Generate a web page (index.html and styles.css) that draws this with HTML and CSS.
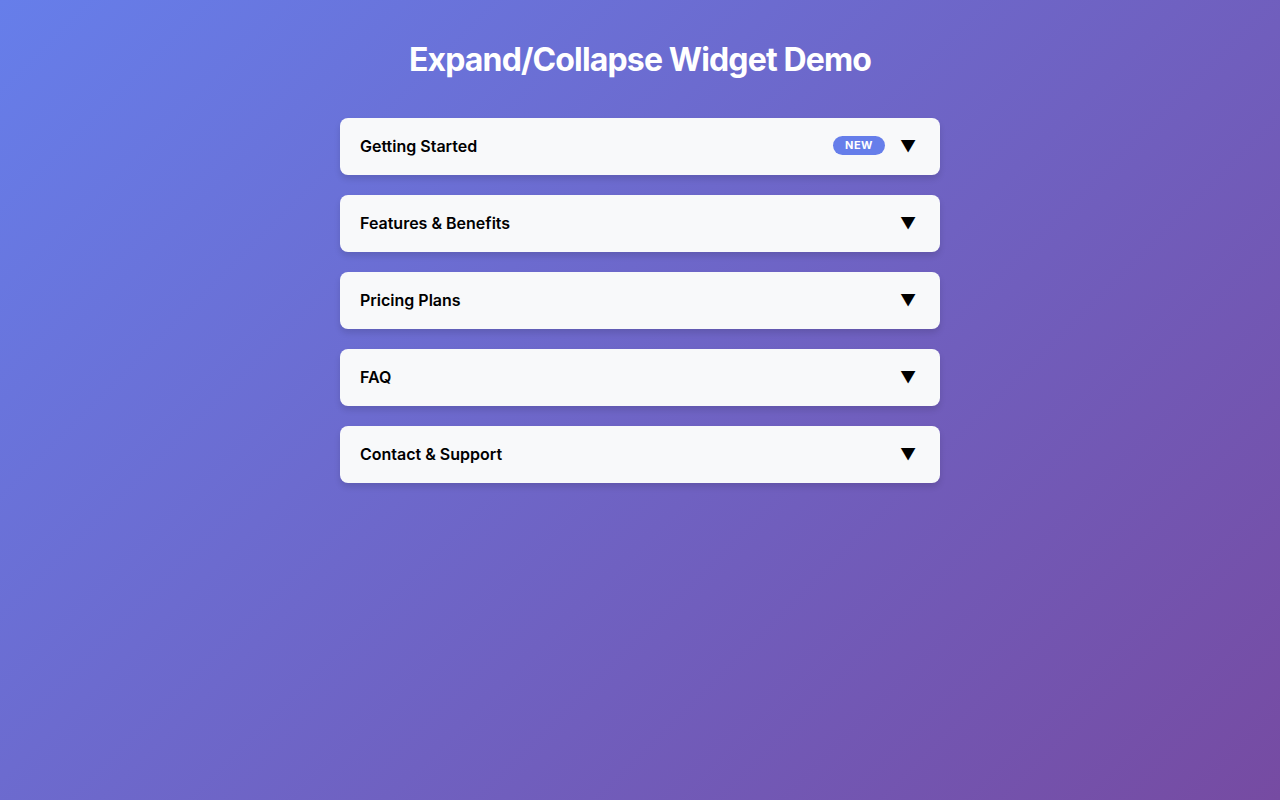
FILE: index.html
```html
<!DOCTYPE html>
<html lang="en">
<head>
<meta charset="utf-8">
<title>Expand/Collapse Widget Demo</title>
<link rel="stylesheet" href="styles.css">
</head>
<body>
<main class="page">
  <h1 class="title">Expand/Collapse Widget Demo</h1>
  <div class="list">
    <div class="item">
      <span class="item-title">Getting Started</span>
      <span class="item-right"><span class="badge">NEW</span><span class="arrow">▼</span></span>
    </div>
    <div class="item">
      <span class="item-title">Features &amp; Benefits</span>
      <span class="item-right"><span class="arrow">▼</span></span>
    </div>
    <div class="item">
      <span class="item-title">Pricing Plans</span>
      <span class="item-right"><span class="arrow">▼</span></span>
    </div>
    <div class="item">
      <span class="item-title">FAQ</span>
      <span class="item-right"><span class="arrow">▼</span></span>
    </div>
    <div class="item">
      <span class="item-title">Contact &amp; Support</span>
      <span class="item-right"><span class="arrow">▼</span></span>
    </div>
  </div>
</main>
</body>
</html>
```

FILE: styles.css
```css
html, body {
  margin: 0;
  height: 100%;
}
body {
  font-family: Inter, "Noto Sans", sans-serif;
  background: linear-gradient(135deg, #667eea 0%, #764ba2 100%);
  min-height: 100vh;
  color: #000;
}
.page {
  max-width: 600px;
  margin: 0 auto;
  padding: 40px 20px;
}
.title {
  text-align: center;
  color: #fff;
  font-size: 32px;
  font-weight: 700;
  letter-spacing: -0.85px;
  margin: 0 0 38px;
  line-height: 40px;
}
.list {
  display: flex;
  flex-direction: column;
  gap: 20px;
}
.item {
  background: #f8f9fa;
  border-radius: 8px;
  box-shadow: 0 4px 6px rgba(0, 0, 0, 0.12);
  display: flex;
  align-items: center;
  justify-content: space-between;
  padding: 18px 20px;
  height: 21px;
}
.item-title {
  font-size: 16px;
  font-weight: 600;
  line-height: 21px;
}
.item-right {
  display: flex;
  align-items: center;
  gap: 12px;
}
.badge {
  background: #667eea;
  color: #fff;
  font-size: 11px;
  font-weight: 700;
  letter-spacing: 0.5px;
  padding: 3px 12px;
  line-height: 13px;
  border-radius: 10px;
  margin-bottom: 3px;
}
.arrow {
  width: 22px;
  text-align: center;
  font-size: 16px;
  line-height: 21px;
  margin-right: 1px;
}
```
